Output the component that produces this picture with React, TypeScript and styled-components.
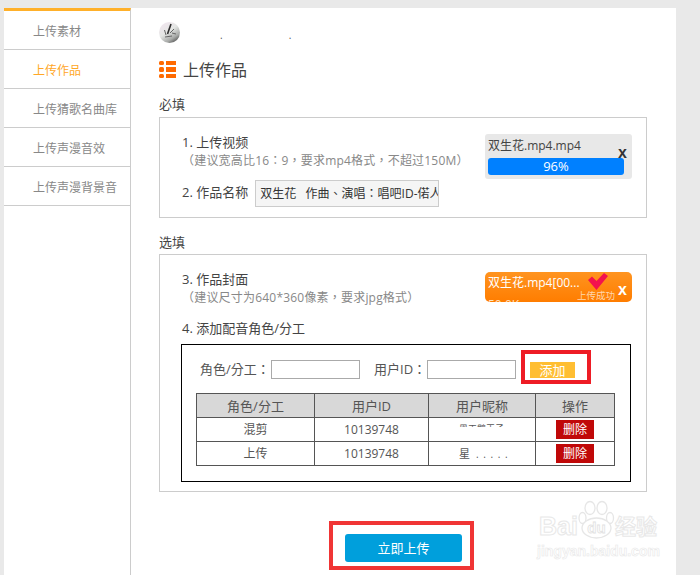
import React from "react";
import styled, { createGlobalStyle } from "styled-components";

const GlobalStyle = createGlobalStyle`
  html, body {
    margin: 0;
    height: 575px;
    overflow: hidden;
    background: #e9e9e9;
    font-family: "Open Sans", "Noto Sans CJK SC", sans-serif;
    color: #444;
  }
  * { box-sizing: border-box; }
`;

// TC has the centred full-width punctuation the reference shows
const centredPunct = `"Open Sans", "Noto Sans CJK TC", sans-serif`;

const menu = ["上传素材", "上传作品", "上传猜歌名曲库", "上传声漫音效", "上传声漫背景音"];

const roles = [
  { role: "混剪", id: "10139748", nick: "黑天鹅王子", clipped: true },
  { role: "上传", id: "10139748", nick: "星", clipped: false },
];

export default function App() {
  return (
    <Shell>
      <GlobalStyle />
      <Sidebar>
        {menu.map((item, i) => (
          <MenuItem key={item} active={i === 1}>{item}</MenuItem>
        ))}
      </Sidebar>
      <Main>
        <UserRow>
          <Avatar />
          <UserDots>
            <span>.</span>
            <span>.</span>
          </UserDots>
        </UserRow>
        <Heading>
          <ListIcon />
          上传作品
        </Heading>

        <GroupLabel>必填</GroupLabel>
        <FieldBox>
          <FieldRow>
            <div>
              <StepTitle>1. 上传视频</StepTitle>
              <Hint>（建议宽高比16：9，要求mp4格式，不超过150M）</Hint>
            </div>
            <ProgressPill>
              <PillName>双生花.mp4.mp4</PillName>
              <ProgressBar>96%</ProgressBar>
              <CloseMark>x</CloseMark>
            </ProgressPill>
          </FieldRow>
          <NameRow>
            <StepTitle>2. 作品名称</StepTitle>
            <NameInput>双生花&nbsp;&nbsp;&nbsp;作曲、演唱：唱吧ID-偌人</NameInput>
          </NameRow>
        </FieldBox>

        <GroupLabel second>选填</GroupLabel>
        <FieldBox wide>
          <FieldRow>
            <div>
              <StepTitle>3. 作品封面</StepTitle>
              <Hint>（建议尺寸为640*360像素，要求jpg格式）</Hint>
            </div>
            <DonePill>
              <DoneName>双生花.mp4[00...</DoneName>
              <DoneSize>50.0K</DoneSize>
              <CheckMark />
              <DoneText>上传成功</DoneText>
              <CloseMark light>x</CloseMark>
            </DonePill>
          </FieldRow>
          <CrewTitle>4. 添加配音角色/分工</CrewTitle>
          <CrewPanel>
            <CrewForm>
              <RoleLabel>角色/分工：</RoleLabel>
              <TextInput />
              <UserLabel>用户ID：</UserLabel>
              <TextInput />
              <AddButton>添加</AddButton>
            </CrewForm>
            <CrewTable>
              <colgroup>
                <col width={118} />
                <col width={114} />
                <col width={107} />
                <col width={79} />
              </colgroup>
              <thead>
                <tr>
                  <th>角色/分工</th>
                  <th>用户ID</th>
                  <th>用户昵称</th>
                  <th>操作</th>
                </tr>
              </thead>
              <tbody>
                {roles.map(row => (
                  <tr key={row.role}>
                    <td>{row.role}</td>
                    <td>{row.id}</td>
                    <td>
                      <Nick clipped={row.clipped}>
                        {row.nick}
                        {!row.clipped && <NickDots>. . . . .</NickDots>}
                      </Nick>
                    </td>
                    <td><DeleteButton>删除</DeleteButton></td>
                  </tr>
                ))}
              </tbody>
            </CrewTable>
          </CrewPanel>
        </FieldBox>

        <SubmitRow>
          <SubmitButton>立即上传</SubmitButton>
        </SubmitRow>
      </Main>
      <Watermark>
        <WatermarkLogo>
          <WatermarkWord>Bai</WatermarkWord>
          <Paw />
          <WatermarkWord small>经验</WatermarkWord>
        </WatermarkLogo>
        <WatermarkUrl>jingyan.baidu.com</WatermarkUrl>
      </Watermark>
    </Shell>
  );
}

function Avatar() {
  return (
    <svg width="21" height="21" viewBox="0 0 21 21">
      <defs>
        <linearGradient id="avatarBg" x1="0.1" y1="0.1" x2="0.7" y2="1">
          <stop offset="0" stopColor="#f0e6ee" />
          <stop offset="0.45" stopColor="#e4e6e4" />
          <stop offset="0.8" stopColor="#a8aaa8" />
          <stop offset="1" stopColor="#5e5e5e" />
        </linearGradient>
      </defs>
      <circle cx="10.5" cy="10.5" r="10.5" fill="url(#avatarBg)" />
      <path d="M12 2 L8.5 12" stroke="#2e2e2e" strokeWidth="1.6" fill="none" />
      <path d="M5.5 8 L7 13 M15 7 L11 11 M13 11 L17 12 M6 15 L13 14" stroke="#666" strokeWidth="1" fill="none" />
    </svg>
  );
}

function ListIcon() {
  return (
    <HeadingIcon width="17" height="17" viewBox="0 0 17 17">
      <g fill="#ff6a00">
        <rect x="0" y="0" width="5" height="4" rx="1.5" />
        <rect x="7" y="0" width="10" height="4" />
        <rect x="0" y="6" width="5" height="5" rx="1.5" />
        <rect x="7" y="6" width="10" height="5" />
        <rect x="0" y="13" width="5" height="4" rx="1.5" />
        <rect x="7" y="13" width="10" height="4" />
      </g>
    </HeadingIcon>
  );
}

function CheckMark() {
  return (
    <CheckIcon width="20" height="17" viewBox="0 0 20 17">
      <path d="M0 7 L4 3.5 L8.5 8 L16 0 L20 3 L8.5 17 Z" fill="#f3134e" />
    </CheckIcon>
  );
}

function Paw() {
  return (
    <PawIcon width="37" height="40" viewBox="0 0 37 40">
      <g fill="#fff" stroke="#e6e6e6" strokeWidth="1.3">
        <ellipse cx="12" cy="8" rx="5" ry="6.5" />
        <ellipse cx="24" cy="8" rx="5" ry="6.5" />
        <ellipse cx="4.5" cy="18" rx="3.5" ry="5.5" />
        <ellipse cx="32" cy="18" rx="3.5" ry="5.5" />
        <ellipse cx="18.5" cy="28" rx="14.5" ry="10" />
      </g>
      <PawText x="18.5" y="33" textAnchor="middle">du</PawText>
    </PawIcon>
  );
}

const Shell = styled.div`
  position: relative;
  display: flex;
  align-items: flex-start;
  height: 575px;
  padding: 8px 0 0 4px;
  overflow: hidden;
`;

const Sidebar = styled.nav`
  width: 127px;
  height: 567px;
  background: #fff;
  border-top: 3px solid #ffb02a;
  border-right: 1px solid #ccc;
`;

const MenuItem = styled.div<{ active?: boolean }>`
  display: flex;
  align-items: center;
  height: 39px;
  padding: 1px 0 0 29px;
  border-bottom: 1px solid #ccc;
  font-size: 12px;
  color: ${p => (p.active ? "#ffa726" : "#888")};
`;

const Main = styled.main`
  width: 545px;
  height: 567px;
  padding: 14px 29px 0 28px;
  background: #fff;
`;

const UserRow = styled.div`
  display: flex;
  align-items: center;
  height: 21px;

  svg {
    display: block;
    flex: none;
  }
`;

const UserDots = styled.div`
  display: flex;
  gap: 66px;
  margin-left: 40px;
  padding-top: 4px;
  font-size: 10px;
  line-height: 10px;
  color: #555;
`;

const Heading = styled.h1`
  display: flex;
  align-items: flex-start;
  gap: 7px;
  height: 22px;
  margin: 17px 0 0;
  font-size: 16px;
  font-weight: 400;
  line-height: 20px;
  color: #444;
`;

const HeadingIcon = styled.svg`
  flex: none;
  margin-top: 1px;
`;

const GroupLabel = styled.h2<{ second?: boolean }>`
  margin: ${p => (p.second ? "15px 0 3px" : "13px 0 4px")};
  font-size: 13px;
  font-weight: 400;
  line-height: 18px;
  color: #444;
`;

const FieldBox = styled.section<{ wide?: boolean }>`
  border: 1px solid #ccc;
  padding: 15px 14px ${p => (p.wide ? "9px" : "10px")} 22px;
`;

const FieldRow = styled.div`
  display: flex;
  justify-content: space-between;
  align-items: flex-start;
`;

const StepTitle = styled.div`
  font-size: 13px;
  line-height: 18px;
  color: #444;
`;

const Hint = styled.div`
  margin-top: 1px;
  font-family: ${centredPunct};
  font-size: 12px;
  line-height: 18px;
  letter-spacing: 0.2px;
  white-space: nowrap;
  color: #888;
`;

const ProgressPill = styled.div`
  position: relative;
  flex: none;
  width: 147px;
  height: 45px;
  margin-top: 1px;
  padding: 3px 8px 0 3px;
  background: #e8e8e8;
  border-radius: 3px;
`;

const PillName = styled.div`
  font-size: 12px;
  line-height: 18px;
  white-space: nowrap;
  color: #444;
`;

const ProgressBar = styled.div`
  margin-top: 3px;
  height: 17px;
  background: #0080ff;
  border-radius: 3px;
  color: #fff;
  font-size: 13px;
  line-height: 17px;
  text-align: center;
`;

const CloseMark = styled.span<{ light?: boolean }>`
  position: absolute;
  top: ${p => (p.light ? "9px" : "10px")};
  right: 5px;
  font-family: "Liberation Sans", sans-serif;
  font-size: 16px;
  font-weight: 700;
  line-height: 18px;
  color: ${p => (p.light ? "#fff" : "#333")};
`;

const DonePill = styled.div`
  position: relative;
  flex: none;
  width: 147px;
  height: 30px;
  margin-top: 2px;
  padding: 2px 3px 0;
  background: linear-gradient(#ff9420, #ff7d00);
  border-radius: 5px;
  color: #fff;
  overflow: hidden;
`;

const DoneName = styled.div`
  font-size: 12px;
  line-height: 18px;
  white-space: nowrap;
`;

const DoneSize = styled.div`
  margin-top: 4px;
  font-size: 12px;
  line-height: 18px;
  color: #ffe3c2;
`;

const CheckIcon = styled.svg`
  position: absolute;
  top: 1px;
  left: 103px;
`;

const DoneText = styled.span`
  position: absolute;
  top: 17px;
  left: 92px;
  font-size: 9.5px;
  line-height: 14px;
  color: #ffd7ad;
  white-space: nowrap;
`;

const NameRow = styled.div`
  display: flex;
  align-items: flex-start;
  gap: 7px;
  margin-top: 1px;

  ${StepTitle} {
    margin-top: 3px;
  }
`;

const NameInput = styled.div`
  width: 184px;
  height: 27px;
  padding: 0 4px;
  background: #f5f5f5;
  border: 1px solid #ccc;
  font-family: ${centredPunct};
  font-size: 12px;
  line-height: 25px;
  color: #333;
  white-space: nowrap;
  overflow: hidden;
`;

const CrewTitle = styled(StepTitle)`
  margin-top: 12px;
`;

const CrewPanel = styled.div`
  margin: 7px 1px 0 -1px;
  padding: 15px 0;
  border: 1px solid #000;
`;

const CrewForm = styled.div`
  display: flex;
  align-items: flex-start;
  height: 20px;
  padding-left: 18px;
  font-family: ${centredPunct};
  font-size: 13px;
  line-height: 18px;
  color: #555;
`;

const RoleLabel = styled.span`
  flex: none;
  width: 71px;
  white-space: nowrap;
`;

const UserLabel = styled.span`
  flex: none;
  width: 53px;
  margin-left: 14px;
  white-space: nowrap;
`;

const TextInput = styled.input`
  flex: none;
  width: 89px;
  height: 19px;
  padding: 0;
  border: 1px solid #aaa;
  background: #fff;
`;

const AddButton = styled.button`
  position: relative;
  flex: none;
  width: 45px;
  height: 16px;
  margin: 2px 0 0 14px;
  padding: 0;
  border: 0;
  background: #ffbe32;
  color: #fff;
  font: inherit;
  font-size: 13px;
  line-height: 16px;
  text-align: center;

  &::after {
    content: "";
    position: absolute;
    inset: -12px -16px -6px -9px;
    border: 4px solid #ee1c25;
  }
`;

const CrewTable = styled.table`
  width: 419px;
  margin: 13px 0 0 14px;
  border-collapse: collapse;
  table-layout: fixed;
  font-size: 12px;
  color: #555;

  th, td {
    height: 24px;
    padding: 0;
    border: 1px solid #555;
    text-align: center;
    font-weight: 400;
    line-height: 18px;
    vertical-align: middle;
  }

  th {
    background: #d8d8d8;
    font-size: 13px;
  }
`;

const Nick = styled.div<{ clipped?: boolean }>`
  width: 62px;
  height: ${p => (p.clipped ? "4px" : "12px")};
  margin: ${p => (p.clipped ? "0 0 9px 30px" : "0 0 0 30px")};
  overflow: hidden;
  text-align: left;
  font-size: ${p => (p.clipped ? "9px" : "11px")};
  line-height: 12px;
  white-space: nowrap;
  color: #555;
`;

const NickDots = styled.span`
  margin-left: 6px;
  font-size: 10px;
  letter-spacing: 1px;
`;

const DeleteButton = styled.span`
  display: block;
  width: 38px;
  height: 19px;
  margin: 0 auto;
  background: #c00808;
  color: #fff;
  font-size: 12px;
  line-height: 19px;
`;

const SubmitRow = styled.div`
  display: flex;
  justify-content: center;
  margin-top: 42px;
  padding-left: 1px;
`;

const SubmitButton = styled.button`
  position: relative;
  width: 117px;
  height: 28px;
  padding: 0;
  border: 0;
  border-radius: 3px;
  background: #009fdc;
  color: #fff;
  font: inherit;
  font-size: 13px;
  line-height: 28px;

  &::after {
    content: "";
    position: absolute;
    inset: -13px -12px -8px -16px;
    border: 4px solid #f03535;
  }
`;

const Watermark = styled.div`
  position: absolute;
  left: 539px;
  top: 500px;
  width: 128px;
`;

const WatermarkLogo = styled.div`
  display: flex;
  align-items: flex-end;
  height: 40px;
`;

const WatermarkWord = styled.span<{ small?: boolean }>`
  margin-bottom: ${p => (p.small ? "-1px" : "1px")};
  font-family: "Liberation Sans", "Noto Sans CJK SC", sans-serif;
  font-size: ${p => (p.small ? "21px" : "25px")};
  font-weight: 700;
  line-height: ${p => (p.small ? "28px" : "26px")};
  color: #fff;
  -webkit-text-stroke: 1px #e8e8e8;
`;

const PawIcon = styled.svg`
  flex: none;
`;

const PawText = styled.text`
  font-family: "Liberation Sans", sans-serif;
  font-size: 15px;
  font-weight: 700;
  fill: #fff;
  stroke: #e2e2e2;
  stroke-width: 0.8px;
`;

const WatermarkUrl = styled.div`
  margin: 4px 0 0 -2px;
  font-family: "Liberation Sans", sans-serif;
  font-size: 14px;
  font-weight: 700;
  line-height: 14px;
  white-space: nowrap;
  color: #fff;
  -webkit-text-stroke: 0.6px #e8e8e8;
`;
